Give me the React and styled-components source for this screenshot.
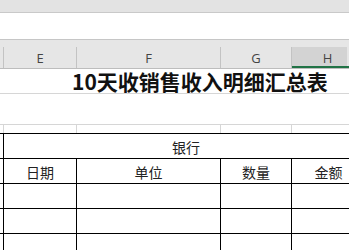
import React from "react";
import styled, { createGlobalStyle } from "styled-components";

const Global = createGlobalStyle`
  html, body { margin: 0; padding: 0; background: #fff; overflow: hidden; }
  * { box-sizing: border-box; }
`;

const COLS = "3px 73px 144px 71px 72px";
const CJK = `"Noto Sans CJK SC", "Noto Sans", sans-serif`;

const Page = styled.div`
  width: 349px;
  height: 250px;
  overflow: hidden;
  font-family: ${CJK};
`;

const TopBand = styled.div`
  height: 13px;
  background: #e3e3e3;
  border-bottom: 1px solid #c9c9c9;
`;

const FormulaBar = styled.div`
  height: 27px;
  background: #fff;
  border-bottom: 1px solid #c6c6c6;
`;

const HeaderArea = styled.div`
  background: #e6e6e6;
  padding-top: 7px;
`;

const HeaderRow = styled.div`
  display: grid;
  grid-template-columns: ${COLS};
  height: 22px;
  border-bottom: 1px solid #bdbdbd;
`;

const ColHead = styled.div`
  border-left: ${(p) => (p.$edge ? "none" : "1px solid #c3c3c3")};
  display: flex;
  align-items: center;
  justify-content: center;
  font-family: "Open Sans", "Liberation Sans", sans-serif;
  font-size: 13px;
  color: #444;
  padding-top: 1px;
  background: ${(p) =>
    p.$selected ? "linear-gradient(to right, #d3d3d3 55px, #e6e6e6 55px)" : "transparent"};
  box-shadow: ${(p) => (p.$selected ? "inset 0 -2px 0 #217346" : "none")};
`;

const TitleRow = styled.div`
  height: 25px;
  border-bottom: 1px solid #d6d6d6;
  display: flex;
  align-items: center;
  padding-left: 72px;
`;

const Title = styled.div`
  font-family: ${CJK};
  font-weight: 700;
  font-size: 21px;
  color: #111;
  white-space: nowrap;
  line-height: 1;
`;

const BlankRow = styled.div`
  height: 31px;
  border-bottom: 1px solid #d6d6d6;
`;

const GapRow = styled.div`
  display: grid;
  grid-template-columns: ${COLS};
  height: 8px;
`;

const GapCell = styled.div`
  border-left: ${(p) => (p.$edge ? "none" : "1px solid #d6d6d6")};
`;

const Table = styled.div`
  display: grid;
  grid-template-columns: ${COLS};
  grid-auto-rows: 25px;
`;

const Cell = styled.div`
  border-top: 1px solid #000;
  border-left: ${(p) => (p.$edge ? "none" : "1px solid #000")};
  grid-column: ${(p) => p.$span || "auto"};
  display: flex;
  align-items: center;
  justify-content: center;
  font-family: ${CJK};
  font-size: 14px;
  color: #222;
  padding-left: ${(p) => p.$pl || 0}px;
  padding-top: 1px;
`;

const columns = ["E", "F", "G", "H"];

export default function App() {
  return (
    <Page>
      <Global />
      <TopBand />
      <FormulaBar />
      <HeaderArea>
        <HeaderRow>
          <ColHead $edge />
          {columns.map((c) => (
            <ColHead key={c} $selected={c === "H"}>
              {c}
            </ColHead>
          ))}
        </HeaderRow>
      </HeaderArea>
      <TitleRow>
        <Title>10天收销售收入明细汇总表</Title>
      </TitleRow>
      <BlankRow />
      <GapRow>
        <GapCell $edge />
        <GapCell />
        <GapCell />
        <GapCell />
        <GapCell />
      </GapRow>
      <Table>
        <Cell $edge />
        <Cell $span="2 / 6" $pl={5}>银行</Cell>
        <Cell $edge />
        <Cell>日期</Cell>
        <Cell>单位</Cell>
        <Cell>数量</Cell>
        <Cell $pl={2}>金额</Cell>
        {[0, 1, 2].map((r) => (
          <React.Fragment key={r}>
            <Cell $edge />
            <Cell />
            <Cell />
            <Cell />
            <Cell />
          </React.Fragment>
        ))}
      </Table>
    </Page>
  );
}
